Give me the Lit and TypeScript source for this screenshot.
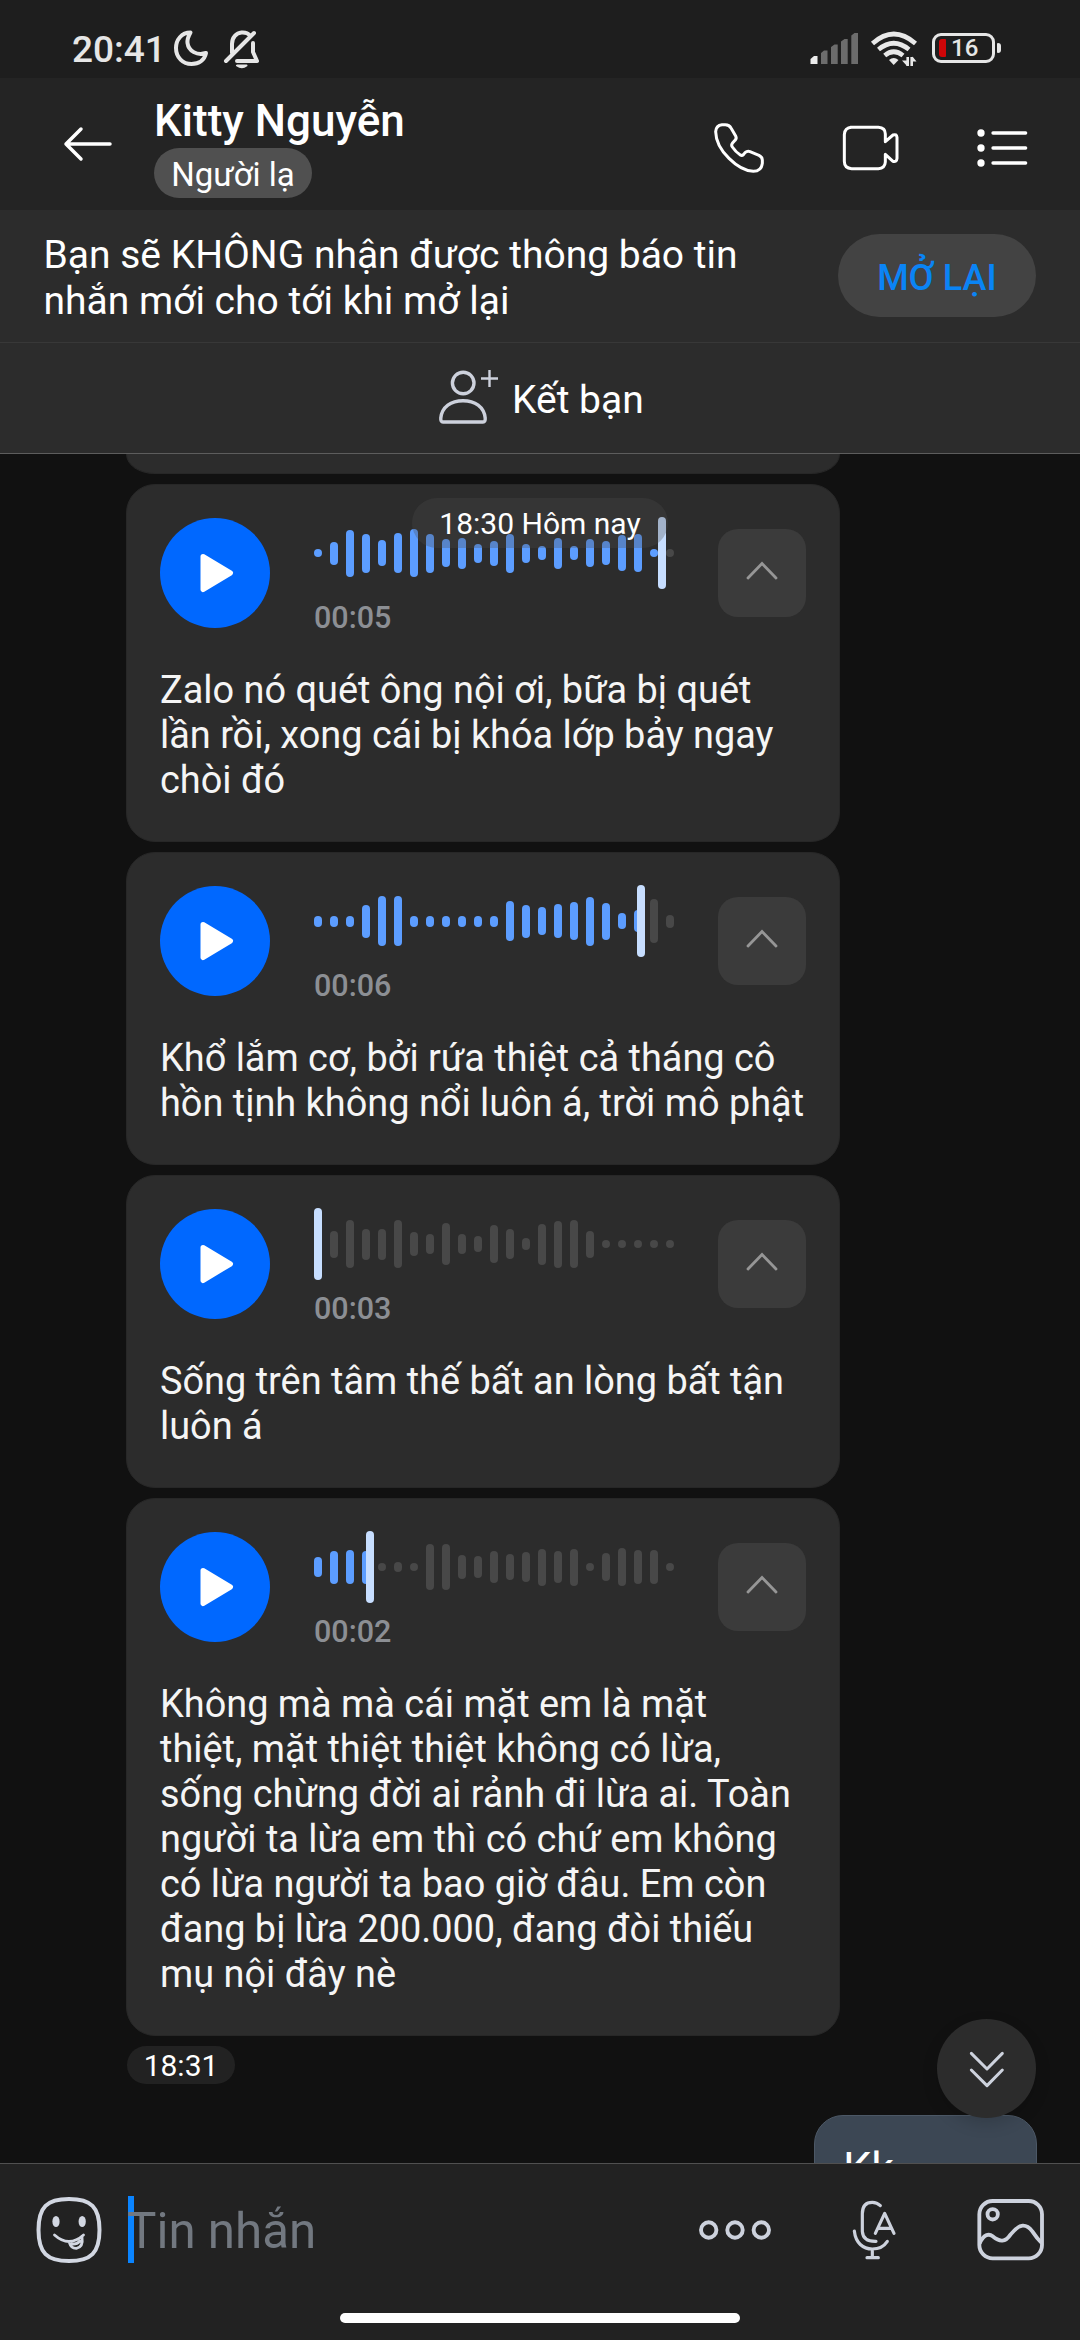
import { LitElement, html, css, svg } from "lit";
import { customElement, property } from "lit/decorators.js";
import { classMap } from "lit/directives/class-map.js";

interface Voice {
  bars: number[];
  head: number;
  time: string;
  text: string;
}

const PITCH = 16;

const VOICES: Voice[] = [
  {
    bars: [8, 23, 47, 39, 26, 40, 48, 39, 28, 31, 19, 25, 39, 19, 14, 31, 14, 28, 24, 36, 38, 8, 8],
    head: 343.5,
    time: "00:05",
    text: "Zalo nó quét ông nội ơi, bữa bị quét\nlần rồi, xong cái bị khóa lớp bảy ngay\nchòi đó",
  },
  {
    bars: [11, 11, 11, 33, 50, 50, 11, 11, 11, 11, 11, 11, 40, 33, 28, 34, 38, 49, 37, 16, 22, 44, 13],
    head: 322.5,
    time: "00:06",
    text: "Khổ lắm cơ, bởi rứa thiệt cả tháng cô\nhồn tịnh không nổi luôn á, trời mô phật",
  },
  {
    bars: [8, 27, 48, 31, 31, 48, 24, 20, 42, 20, 16, 38, 30, 12, 41, 47, 48, 27, 8, 8, 8, 8, 8],
    head: 0,
    time: "00:03",
    text: "Sống trên tâm thế bất an lòng bất tận\nluôn á",
  },
  {
    bars: [20, 33, 34, 33, 8, 10, 8, 46, 46, 24, 22, 32, 26, 30, 37, 32, 37, 8, 28, 38, 34, 34, 8],
    head: 52,
    time: "00:02",
    text: "Không mà mà cái mặt em là mặt\nthiệt, mặt thiệt thiệt không có lừa,\nsống chừng đời ai rảnh đi lừa ai. Toàn\nngười ta lừa em thì có chứ em không\ncó lừa người ta bao giờ đâu. Em còn\nđang bị lừa 200.000, đang đòi thiếu\nmụ nội đây nè",
  },
];

@customElement("voice-card")
export class VoiceCard extends LitElement {
  @property({ attribute: false }) voice!: Voice;

  static styles = css`
    :host {
      display: block;
      box-sizing: border-box;
      width: 714px;
      flex: none;
      padding: 33px 33px 38px;
      border: 1px solid #272727;
      border-radius: 29px;
      background: #2c2c2c;
    }
    .player {
      display: flex;
      height: 150px;
    }
    .play {
      flex: none;
      width: 110px;
      height: 110px;
      border-radius: 50%;
      background: #0068ff;
    }
    .play svg,
    .toggle svg {
      display: block;
    }
    .track {
      flex: none;
      width: 360px;
      margin-left: 44px;
    }
    .wave {
      position: relative;
      display: flex;
      align-items: center;
      gap: 8px;
      height: 72px;
      margin-top: -1px;
    }
    .bar {
      flex: none;
      width: 8px;
      border-radius: 4px;
      background: #484848;
    }
    .bar.on {
      background: #5c9dff;
    }
    .head {
      position: absolute;
      top: 0;
      width: 8px;
      height: 72px;
      border-radius: 4px;
      background: #c7deff;
    }
    .time {
      margin-top: 11px;
      font-size: 30.5px;
      font-weight: 500;
      line-height: 36px;
      color: #8c8f94;
    }
    .toggle {
      flex: none;
      width: 88px;
      height: 88px;
      margin: 11px 0 0 44px;
      border-radius: 20px;
      background: #3b3b3b;
    }
    .text {
      font-size: 37.9px;
      line-height: 45px;
      white-space: pre;
      color: #f5f5f5;
    }
  `;

  render() {
    const v = this.voice;
    return html`
      <div class="player">
        <div class="play">
          <svg width="110" height="110" viewBox="0 0 110 110">
            <path d="M43 38.500L70.500 55L43 71.500Z" fill="#fff" stroke="#fff" stroke-width="5" stroke-linejoin="round" />
          </svg>
        </div>
        <div class="track">
          <div class="wave">
            ${v.bars.map(
              (h, i) =>
                html`<div class=${classMap({ bar: true, on: i * PITCH < v.head })} style="height:${h}px"></div>`
            )}
            <div class="head" style="left:${v.head}px"></div>
          </div>
          <div class="time">${v.time}</div>
        </div>
        <div class="toggle">
          <svg width="88" height="88" viewBox="0 0 88 88">
            <path d="M30 49L44 34.500L58 49" fill="none" stroke="#969696" stroke-width="2.800" stroke-linecap="round" />
          </svg>
        </div>
      </div>
      <div class="text">${v.text}</div>
    `;
  }
}

const moonAndBell = svg`
  <svg width="90" height="42" viewBox="172 28 90 42" fill="none" stroke="#e6e6e6" stroke-width="4" stroke-linejoin="round" stroke-linecap="round">
    <path d="M190.500 32.500C181.500 32.500 176 40 176 48C176 57.500 183 64 191.500 64C199 64 204.500 60 206 53C197 56 188.500 51 187.500 43C187 39 188.500 36 190.500 32.500Z"/>
    <path d="M232 53V44C232 37 236.500 33 241.500 32.500C245 32.200 248 33 250 35.500M253 43V52L257 61H237M226 61L254 33"/>
    <path d="M237 65.500H246.500Q242 69 237 65.500Z" stroke-width="2" fill="#e6e6e6"/>
  </svg>`;

const signal = svg`
  <svg width="50" height="34" viewBox="809 32 50 34">
    <path d="M810.500 64V59L814 56H817.500V64Z" fill="#ececec"/>
    <path d="M821 64V53L824 50.500H827.500V64ZM831 64V47L834.500 44.500H837.700V64ZM841 64V41.500L844.500 39H847.700V64ZM851.300 64V35.500L854.500 33H858V64Z" fill="#6c6c6c"/>
  </svg>`;

const wifi = svg`
  <svg width="50" height="40" viewBox="870 29 50 40" fill="none" stroke="#e8e8e8" stroke-width="4.600">
    <path d="M872.500 43.500Q893.700 24.500 915.500 43.500M878.500 49.500Q893.700 37 909 49.500M884.700 55.500Q893.700 48 903 55.500"/>
    <path d="M889 60Q893.700 56 898.500 60L893.700 65Z" fill="#e8e8e8" stroke="none"/>
    <path d="M907.700 57V66M911.700 66V57" stroke-width="2.600"/>
    <path d="M902 60.500L907 66V60.500ZM912.500 56.500L916.500 61.500H912.500Z" fill="#e8e8e8" stroke="none"/>
  </svg>`;

const backIcon = svg`
  <svg width="52" height="40" viewBox="62 124 52 40" fill="none" stroke="#fff" stroke-width="3.500" stroke-linecap="round" stroke-linejoin="round">
    <path d="M110 144H66M81 129L66 144L81 159"/>
  </svg>`;

const phoneIcon = svg`
  <svg width="56" height="56" viewBox="213 360 168 168" fill="none" stroke="#fff" stroke-width="9" stroke-linejoin="round">
    <path d="M246 374H256Q268 374 273 384L287 408Q291 415 285 421L277 430Q273 435 277 441Q287 456 301 465Q306 468 311 463L315 458Q322 452 330 455L357 466Q367 471 367 480V490Q364 514 340 514C295 512 228 452 227 395Q228 376 246 374Z"/>
  </svg>`;

const videoIcon = svg`
  <svg width="60" height="48" viewBox="604 372 180 144" fill="none" stroke="#fff" stroke-width="9" stroke-linejoin="round">
    <path d="M632 382H716Q737 383 737 402V425L760 405Q771 401 772 412V475Q771 487 760 484L737 463V486Q736 505 716 506H636Q614 505 614 484V404Q615 383 636 382Z"/>
  </svg>`;

const listIcon = svg`
  <svg width="52" height="40" viewBox="1013 384 156 120" fill="#fff" stroke="#fff" stroke-linecap="round">
    <g stroke="none"><circle cx="1025" cy="399" r="11"/><circle cx="1025" cy="444" r="11"/><circle cx="1025" cy="489" r="11"/></g>
    <path d="M1061 399H1159M1061 444H1159M1061 489H1159" stroke-width="10"/>
  </svg>`;

const addIcon = svg`
  <svg width="62" height="58" viewBox="437 368 62 58" fill="none" stroke="#cdd1dc" stroke-width="3.400">
    <circle cx="463.200" cy="383" r="10.800"/>
    <path d="M443 422Q440.500 422 440.800 418C442 407 451 400.700 463 400.700C475 400.700 484 407 485.200 418Q485.500 422 483 422Z"/>
    <path d="M489.500 370V387M481 378.500H498" stroke-width="2.400"/>
  </svg>`;

const smileIcon = svg`
  <svg width="68" height="68" viewBox="35 2196 68 68" fill="none" stroke="#d2d7e2" stroke-width="4" stroke-linecap="round">
    <path d="M69 2199C91 2199 99.500 2207 99.500 2230C99.500 2253 91 2261 69 2261C47 2261 38.500 2253 38.500 2230C38.500 2207 47 2199 69 2199Z"/>
    <ellipse cx="56" cy="2221.500" rx="3.600" ry="5.600" fill="#d2d7e2" stroke="none"/>
    <ellipse cx="82.200" cy="2221.500" rx="3.600" ry="5.600" fill="#d2d7e2" stroke="none"/>
    <path d="M54.500 2235Q69 2248 83.500 2235M69.500 2243Q71 2248.500 76.500 2248.300Q83.500 2247 82 2237M72 2244Q77 2244.500 80 2241" stroke-width="2.800"/>
  </svg>`;

const dotsIcon = svg`
  <svg width="74" height="22" viewBox="698 2219 74 22" fill="none" stroke="#cdd2dd" stroke-width="3.900">
    <circle cx="708.700" cy="2230" r="7.700"/><circle cx="735" cy="2230" r="7.700"/><circle cx="761.300" cy="2230" r="7.700"/>
  </svg>`;

const micIcon = svg`
  <svg width="46" height="62" viewBox="637 658 138 186" fill="none" stroke="#cdd2dd" stroke-width="9.500" stroke-linecap="round" stroke-linejoin="round">
    <path d="M722 678Q712 668 698 668Q668 668 668 702V755Q670 786 709 785M644 754C648 790 670 808 698 808Q728 808 743 785M698 809V834M682 834H716M707 761L735 701L763 761M714 746H756"/>
  </svg>`;

const photoIcon = svg`
  <svg width="70" height="66" viewBox="1009 652 210 198" fill="none" stroke="#cdd2dd" stroke-width="11.500">
    <rect x="1019" y="664" width="188" height="172" rx="40"/>
    <circle cx="1059" cy="704" r="15.500"/>
    <path d="M1020 791C1032 765 1047 760 1059 770C1080 788 1097 788 1113 764C1140 730 1160 732 1178 755Q1192 776 1206 790"/>
  </svg>`;

@customElement("app-root")
export class AppRoot extends LitElement {
  static styles = css`
    :host {
      display: flex;
      flex-direction: column;
      width: 1080px;
      height: 2340px;
      overflow: hidden;
      background: #111;
      color: #fff;
      font-family: Roboto, "Noto Sans", sans-serif;
    }
    svg {
      display: block;
      flex: none;
    }
    .status {
      display: flex;
      flex: none;
      box-sizing: border-box;
      height: 78px;
      padding: 28px 79px 8px 72px;
      background: #1e1e1e;
    }
    .clock {
      width: 100px;
      font-size: 37px;
      font-weight: 500;
      line-height: 44px;
      color: #e6e6e6;
    }
    .system {
      display: flex;
      margin-left: auto;
    }
    .signal {
      margin-top: 4px;
    }
    .wifi {
      margin: 1px 0 0 11px;
    }
    .battery {
      display: flex;
      align-items: center;
      box-sizing: border-box;
      width: 63px;
      height: 30px;
      margin: 5px 0 0 12px;
      padding: 0 4px;
      border: 3px solid #e6e6e6;
      border-radius: 9px;
      color: #e6e6e6;
      font-size: 24px;
      font-weight: 500;
      line-height: 24px;
    }
    .level {
      width: 7px;
      height: 18px;
      margin-right: 5px;
      border-radius: 3px 1px 1px 3px;
      background: #cf0608;
    }
    .stub {
      width: 4px;
      height: 10px;
      margin: 15px 0 0 2px;
      border-radius: 1px 3px 3px 1px;
      background: #e6e6e6;
    }
    .header {
      display: flex;
      flex: none;
      align-items: flex-start;
      height: 132px;
      background: #242424;
    }
    .back {
      margin: 46px 0 0 62px;
    }
    .who {
      flex: none;
      width: 560px;
      margin-left: 39px;
    }
    .name {
      margin-top: 16px;
      padding-left: 1px;
      font-size: 44px;
      font-weight: 500;
      line-height: 54px;
    }
    .tag {
      box-sizing: border-box;
      width: 158px;
      height: 50px;
      margin-left: 1px;
      border-radius: 25px;
      background: #505050;
      text-align: center;
      font-size: 33px;
      line-height: 53px;
    }
    .phone {
      margin: 42px 0 0 -2px;
    }
    .video {
      margin: 46px 0 0 74px;
    }
    .list {
      margin: 50px 0 0 76px;
    }
    .notice {
      display: flex;
      flex: none;
      box-sizing: border-box;
      height: 133px;
      padding: 22px 44px 0 43.5px;
      border-bottom: 1px solid #383838;
      background: #2c2c2c;
    }
    .notice-text {
      font-size: 39px;
      line-height: 46px;
      white-space: pre;
    }
    .reopen {
      width: 198px;
      height: 83px;
      margin: 2px 0 0 auto;
      border-radius: 42px;
      background: #434343;
      color: #0a84f5;
      text-align: center;
      font-size: 36px;
      font-weight: 500;
      line-height: 88px;
    }
    .friend {
      display: flex;
      flex: none;
      box-sizing: border-box;
      height: 111px;
      padding: 25px 0 0 437px;
      border-bottom: 1px solid #5d5d5d;
      background: #2c2c2c;
      font-size: 39px;
      line-height: 64px;
    }
    .friend span {
      margin-left: 13px;
    }
    .chat {
      position: relative;
      display: flex;
      flex: 1;
      flex-direction: column;
      gap: 10px;
      min-height: 0;
      padding-left: 126px;
      overflow: hidden;
    }
    .previous {
      flex: none;
      box-sizing: border-box;
      width: 714px;
      height: 20px;
      border: 1px solid #272727;
      border-top: 0;
      border-radius: 0 0 29px 29px / 0 0 20px 20px;
      background: #2c2c2c;
    }
    .date {
      position: absolute;
      top: 44px;
      left: 412px;
      width: 256px;
      height: 50px;
      border-radius: 25px;
      background: rgba(77, 77, 77, 0.3);
      text-align: center;
      font-size: 30px;
      line-height: 51px;
    }
    .stamp {
      flex: none;
      width: 108px;
      height: 38px;
      margin-left: 1px;
      border-radius: 19px;
      background: #222;
      text-align: center;
      font-size: 30px;
      line-height: 39px;
    }
    .mine {
      flex: none;
      box-sizing: border-box;
      width: 223px;
      height: 120px;
      margin: 21px 43px 0 auto;
      padding: 28px 28px 0;
      border: 1px solid #4c5866;
      border-radius: 29px;
      background: #3c4754;
      font-size: 45px;
      line-height: 50px;
    }
    .down {
      position: absolute;
      top: 1565px;
      left: 937px;
      width: 99px;
      height: 99px;
      border-radius: 50%;
      background: #2c2c2c;
      box-shadow: 0 6px 16px rgba(0, 0, 0, 0.15);
    }
    .composer {
      display: flex;
      flex: none;
      align-items: flex-start;
      box-sizing: border-box;
      height: 130px;
      border-top: 1px solid #505050;
      background: #222;
    }
    .smile {
      margin: 32px 0 0 35px;
    }
    .input {
      position: relative;
      width: 571px;
      height: 67px;
      margin: 32px 0 0 24px;
      color: #727880;
      font-size: 49.3px;
      line-height: 71px;
    }
    .caret {
      position: absolute;
      top: 0;
      left: 1px;
      width: 6px;
      height: 67px;
      background: #0a84ff;
    }
    .hint {
      position: relative;
    }
    .dots {
      margin-top: 55px;
    }
    .mic {
      margin: 35px 0 0 80px;
    }
    .photo {
      margin: 33px 0 0 78px;
    }
    .nav {
      display: flex;
      flex: none;
      height: 47px;
      padding-top: 20px;
      justify-content: center;
      box-sizing: border-box;
      background: #222;
    }
    .pill {
      width: 400px;
      height: 10px;
      border-radius: 5px;
      background: #fff;
    }
  `;

  render() {
    return html`
      <div class="status">
        <div class="clock">20:41</div>
        ${moonAndBell}
        <div class="system">
          <div class="signal">${signal}</div>
          <div class="wifi">${wifi}</div>
          <div class="battery"><div class="level"></div>16</div>
          <div class="stub"></div>
        </div>
      </div>
      <div class="header">
        <div class="back">${backIcon}</div>
        <div class="who">
          <div class="name">Kitty Nguyễn</div>
          <div class="tag">Người lạ</div>
        </div>
        <div class="phone">${phoneIcon}</div>
        <div class="video">${videoIcon}</div>
        <div class="list">${listIcon}</div>
      </div>
      <div class="notice">
        <div class="notice-text">${"Bạn sẽ KHÔNG nhận được thông báo tin\nnhắn mới cho tới khi mở lại"}</div>
        <div class="reopen">MỞ LẠI</div>
      </div>
      <div class="friend">${addIcon}<span>Kết bạn</span></div>
      <div class="chat">
        <div class="previous"></div>
        ${VOICES.map((v) => html`<voice-card .voice=${v}></voice-card>`)}
        <div class="stamp">18:31</div>
        <div class="mine">Kk</div>
        <div class="date">18:30 Hôm nay</div>
        <div class="down">
          <svg width="99" height="99" viewBox="890 116 297 297" fill="none" stroke="#cdd2dd" stroke-width="9" stroke-linecap="round" stroke-linejoin="round">
            <path d="M993 219L1040 266L1086 219M993 269L1040 316L1086 269" />
          </svg>
        </div>
      </div>
      <div class="composer">
        <div class="smile">${smileIcon}</div>
        <div class="input"><div class="caret"></div><div class="hint">Tin nhắn</div></div>
        <div class="dots">${dotsIcon}</div>
        <div class="mic">${micIcon}</div>
        <div class="photo">${photoIcon}</div>
      </div>
      <div class="nav"><div class="pill"></div></div>
    `;
  }
}
